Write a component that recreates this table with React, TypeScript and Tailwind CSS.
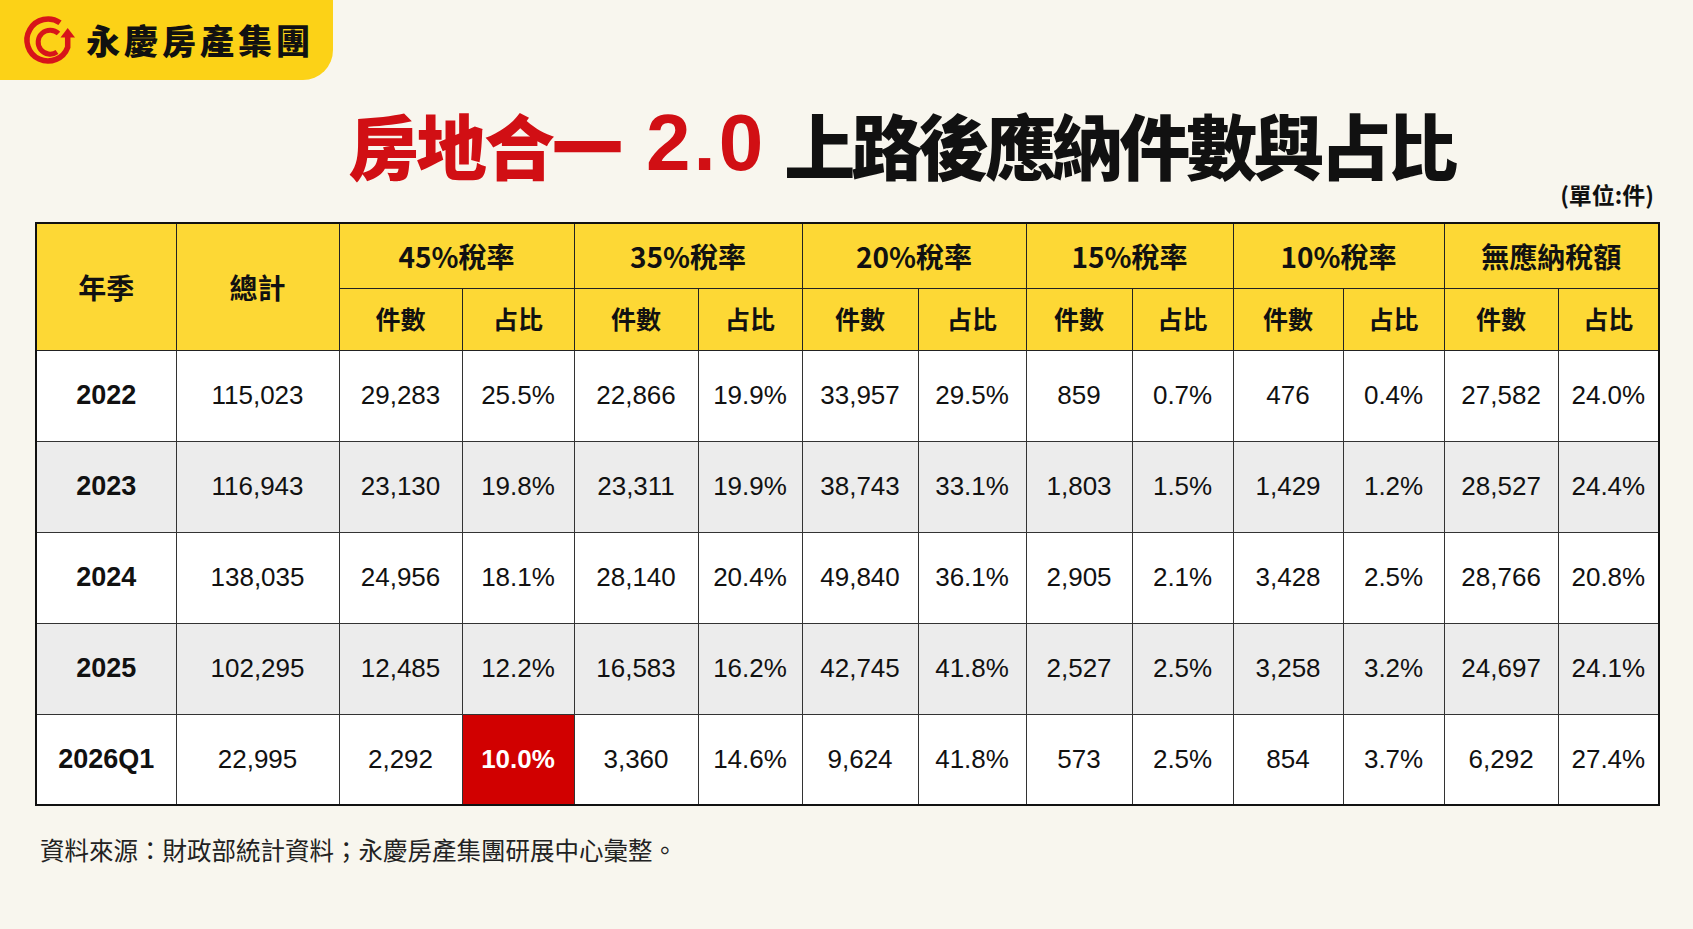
import React from "react";

type Row = { year: string; total: string; cells: string[] };

const ROWS: Row[] = [
  { year: "2022", total: "115,023", cells: ["29,283", "25.5%", "22,866", "19.9%", "33,957", "29.5%", "859", "0.7%", "476", "0.4%", "27,582", "24.0%"] },
  { year: "2023", total: "116,943", cells: ["23,130", "19.8%", "23,311", "19.9%", "38,743", "33.1%", "1,803", "1.5%", "1,429", "1.2%", "28,527", "24.4%"] },
  { year: "2024", total: "138,035", cells: ["24,956", "18.1%", "28,140", "20.4%", "49,840", "36.1%", "2,905", "2.1%", "3,428", "2.5%", "28,766", "20.8%"] },
  { year: "2025", total: "102,295", cells: ["12,485", "12.2%", "16,583", "16.2%", "42,745", "41.8%", "2,527", "2.5%", "3,258", "3.2%", "24,697", "24.1%"] },
  { year: "2026Q1", total: "22,995", cells: ["2,292", "10.0%", "3,360", "14.6%", "9,624", "41.8%", "573", "2.5%", "854", "3.7%", "6,292", "27.4%"] }
];

const GROUPS = ["45%稅率", "35%稅率", "20%稅率", "15%稅率", "10%稅率", "無應納稅額"];
const WIDTHS = [140, 163, 123, 112, 124, 104, 116, 108, 106, 101, 110, 101, 114, 101];

function Logo() {
  return (
    <svg width="56" height="56" viewBox="0 0 56 56" fill="none">
      {/* outer ring, open at upper right, ends in the arrow */}
      <path d="M40 10.8 A21 21 0 1 0 47.7 35.2 L47.7 24" stroke="#d7141a" strokeWidth="5.5" />
      <path d="M40.5 25.5 L47.7 16 L55 25.5 Z" fill="#d7141a" />
      {/* inner C */}
      <path d="M38.5 21.5 A12 12 0 1 0 37 40" stroke="#d7141a" strokeWidth="5" />
    </svg>
  );
}

export default function App() {
  const cjk = { fontFamily: '"Noto Sans CJK TC", "Noto Sans CJK SC", sans-serif' };
  const num = { fontFamily: '"Liberation Sans", Arial, "Noto Sans CJK TC", sans-serif' };

  return (
    <div className="w-[1693px] h-[929px] bg-[#f8f6ee] overflow-hidden text-[#111]" style={cjk}>
      <div className="w-[333px] h-[80px] bg-[#fcd217] rounded-br-[30px] flex items-center pl-[20px] gap-[10px]">
        <Logo />
        <span className="text-[34px] font-black leading-none tracking-[4px] text-[#111]">永慶房產集團</span>
      </div>

      <div className="mt-[23px] pl-[348px] flex items-center leading-none font-black text-[71px]">
        <span className="text-[#d10f14] tracking-[-3px]">房地合一</span>
        <span className="text-[#d10f14] ml-[26px] text-[80px] tracking-[3px]" style={num}>2.0</span>
        <span className="ml-[18px] text-[#111] tracking-[-4px]">上路後應納件數與占比</span>
      </div>

      <div className="flex justify-end pr-[39px] -mt-[2px]">
        <span className="text-[23px] font-bold leading-[26px]">(單位:件)</span>
      </div>

      <div className="pl-[35px] mt-[15px]">
        <table className="border-collapse table-fixed border-2 border-[#111]" style={{ width: 1623 }}>
          <colgroup>
            {WIDTHS.map((w, i) => (
              <col key={i} style={{ width: w }} />
            ))}
          </colgroup>
          <thead>
            <tr className="bg-[#fdd835] h-[65px]">
              <th rowSpan={2} className="border-[1.5px] border-[#222] text-[28px] font-bold">年季</th>
              <th rowSpan={2} className="border-[1.5px] border-[#222] text-[28px] font-bold">總計</th>
              {GROUPS.map((g) => (
                <th key={g} colSpan={2} className="border-[1.5px] border-[#222] text-[28px] font-bold">{g}</th>
              ))}
            </tr>
            <tr className="bg-[#fdd835] h-[62px]">
              {GROUPS.map((g) => (
                <React.Fragment key={g}>
                  <th className="border-[1.5px] border-[#222] text-[25px] font-bold">件數</th>
                  <th className="border-[1.5px] border-[#222] text-[25px] font-bold">占比</th>
                </React.Fragment>
              ))}
            </tr>
          </thead>
          <tbody style={num}>
            {ROWS.map((r, ri) => (
              <tr key={r.year} className={ri % 2 === 1 ? "bg-[#ececec] h-[91px]" : "bg-white h-[91px]"}>
                <td className="border-[1.5px] border-[#333] text-center text-[27px] font-bold">{r.year}</td>
                <td className="border-[1.5px] border-[#333] text-center text-[26px]">{r.total}</td>
                {r.cells.map((c, ci) => {
                  const hot = ri === 4 && ci === 1;
                  return (
                    <td
                      key={ci}
                      className={
                        hot
                          ? "border-[1.5px] border-[#333] text-center text-[26px] font-bold bg-[#d10000] text-white"
                          : "border-[1.5px] border-[#333] text-center text-[26px]"
                      }
                    >
                      {c}
                    </td>
                  );
                })}
              </tr>
            ))}
          </tbody>
        </table>
      </div>

      <p className="pl-[40px] mt-[28px] text-[24.5px] leading-[32px] text-[#222]">資料來源：財政部統計資料；永慶房產集團研展中心彙整。</p>
    </div>
  );
}
